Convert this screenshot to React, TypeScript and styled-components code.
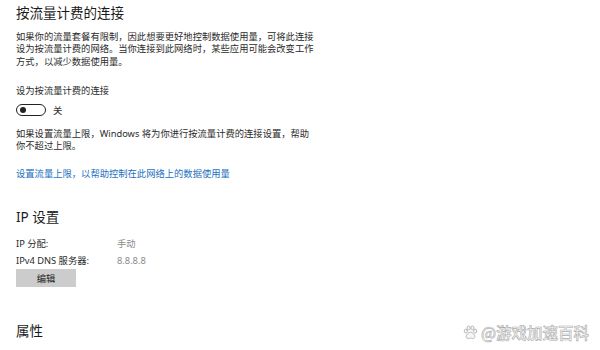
import React from "react";
import styled, { createGlobalStyle } from "styled-components";

const GlobalStyle = createGlobalStyle`
  html, body {
    margin: 0;
    padding: 0;
    background: #fff;
  }
  body {
    font-family: "Noto Sans", "Noto Sans CJK SC", sans-serif;
  }
`;

const Page = styled.div`
  position: relative;
  width: 600px;
  height: 350px;
  overflow: hidden;
  background: #fff;
  padding: 4px 16px 0;
  box-sizing: border-box;
  font-family: "Noto Sans", "Noto Sans CJK SC", sans-serif;
`;

const Heading = styled.h2<{ $top?: number }>`
  margin: ${(p) => p.$top ?? 0}px 0 0;
  font-size: 13.5px;
  line-height: 18px;
  font-weight: 400;
  color: #1a1a1a;
`;

const Text = styled.p<{ $top: number }>`
  margin: ${(p) => p.$top}px 0 0;
  font-size: 9.3px;
  line-height: 12.5px;
  color: #2b2b2b;
  white-space: nowrap;
`;

const ToggleRow = styled.div`
  margin-top: 6.75px;
  height: 12px;
  display: flex;
  align-items: center;
  gap: 7px;
`;

const Toggle = styled.span`
  width: 30px;
  height: 12px;
  box-sizing: border-box;
  border: 1.5px solid #222;
  border-radius: 6px;
  display: flex;
  align-items: center;
  padding-left: 3px;
`;

const Knob = styled.span`
  width: 6px;
  height: 6px;
  border-radius: 50%;
  background: #222;
`;

const ToggleLabel = styled.span`
  font-size: 9.3px;
  color: #2b2b2b;
`;

const Link = styled.a`
  display: block;
  margin-top: 15px;
  font-size: 9.3px;
  line-height: 12.5px;
  color: #1b6fc0;
  text-decoration: none;
`;

const InfoGrid = styled.div`
  margin-top: 8.5px;
  display: grid;
  grid-template-columns: 101px auto;
  font-size: 9.3px;
  line-height: 17px;
`;

const Key = styled.span`
  color: #2b2b2b;
`;

const Value = styled.span`
  color: #8a8a8a;
`;

const Button = styled.button`
  margin-top: 0.5px;
  width: 60px;
  height: 18px;
  border: none;
  background: #cccccc;
  font-family: inherit;
  font-size: 9.3px;
  color: #222;
  padding: 0;
  display: block;
`;

const Watermark = styled.div`
  position: absolute;
  right: 11px;
  bottom: 9px;
  display: flex;
  align-items: center;
  gap: 3px;
  font-size: 15.5px;
  line-height: 18px;
  color: #f6f6f6;
  -webkit-text-stroke: 0.6px #adadad;
  font-family: "Noto Sans CJK SC", sans-serif;
  font-weight: 500;
`;

export default function App() {
  return (
    <>
      <GlobalStyle />
      <Page>
        <Heading>按流量计费的连接</Heading>
        <Text $top={8.75}>
          如果你的流量套餐有限制，因此想要更好地控制数据使用量，可将此连接
          <br />
          设为按流量计费的网络。当你连接到此网络时，某些应用可能会改变工作
          <br />
          方式，以减少数据使用量。
        </Text>
        <Text $top={16.5}>设为按流量计费的连接</Text>
        <ToggleRow>
          <Toggle>
            <Knob />
          </Toggle>
          <ToggleLabel>关</ToggleLabel>
        </ToggleRow>
        <Text $top={11.75}>
          如果设置流量上限，Windows 将为你进行按流量计费的连接设置，帮助
          <br />
          你不超过上限。
        </Text>
        <Link href="#">设置流量上限，以帮助控制在此网络上的数据使用量</Link>

        <Heading $top={27.75}>IP 设置</Heading>
        <InfoGrid>
          <Key>IP 分配:</Key>
          <Value>手动</Value>
          <Key>IPv4 DNS 服务器:</Key>
          <Value>8.8.8.8</Value>
        </InfoGrid>
        <Button>编辑</Button>

        <Heading $top={35}>属性</Heading>

        <Watermark>
          <svg width="15" height="15" viewBox="0 0 16 16" fill="#f6f6f6" stroke="#adadad" strokeWidth="0.9">
            <ellipse cx="3" cy="6.5" rx="1.7" ry="2.1" />
            <ellipse cx="6" cy="3.2" rx="1.7" ry="2.1" />
            <ellipse cx="10" cy="3.2" rx="1.7" ry="2.1" />
            <ellipse cx="13" cy="6.5" rx="1.7" ry="2.1" />
            <path d="M8 7.5c-2.2 0-4.6 3-4.6 5 0 1.6 1.4 2.2 2.4 2 1-.2 1.4-.5 2.2-.5s1.2.3 2.2.5c1 .2 2.4-.4 2.4-2 0-2-2.4-5-4.6-5z" />
          </svg>
          <span>@游戏加速百科</span>
        </Watermark>
      </Page>
    </>
  );
}
